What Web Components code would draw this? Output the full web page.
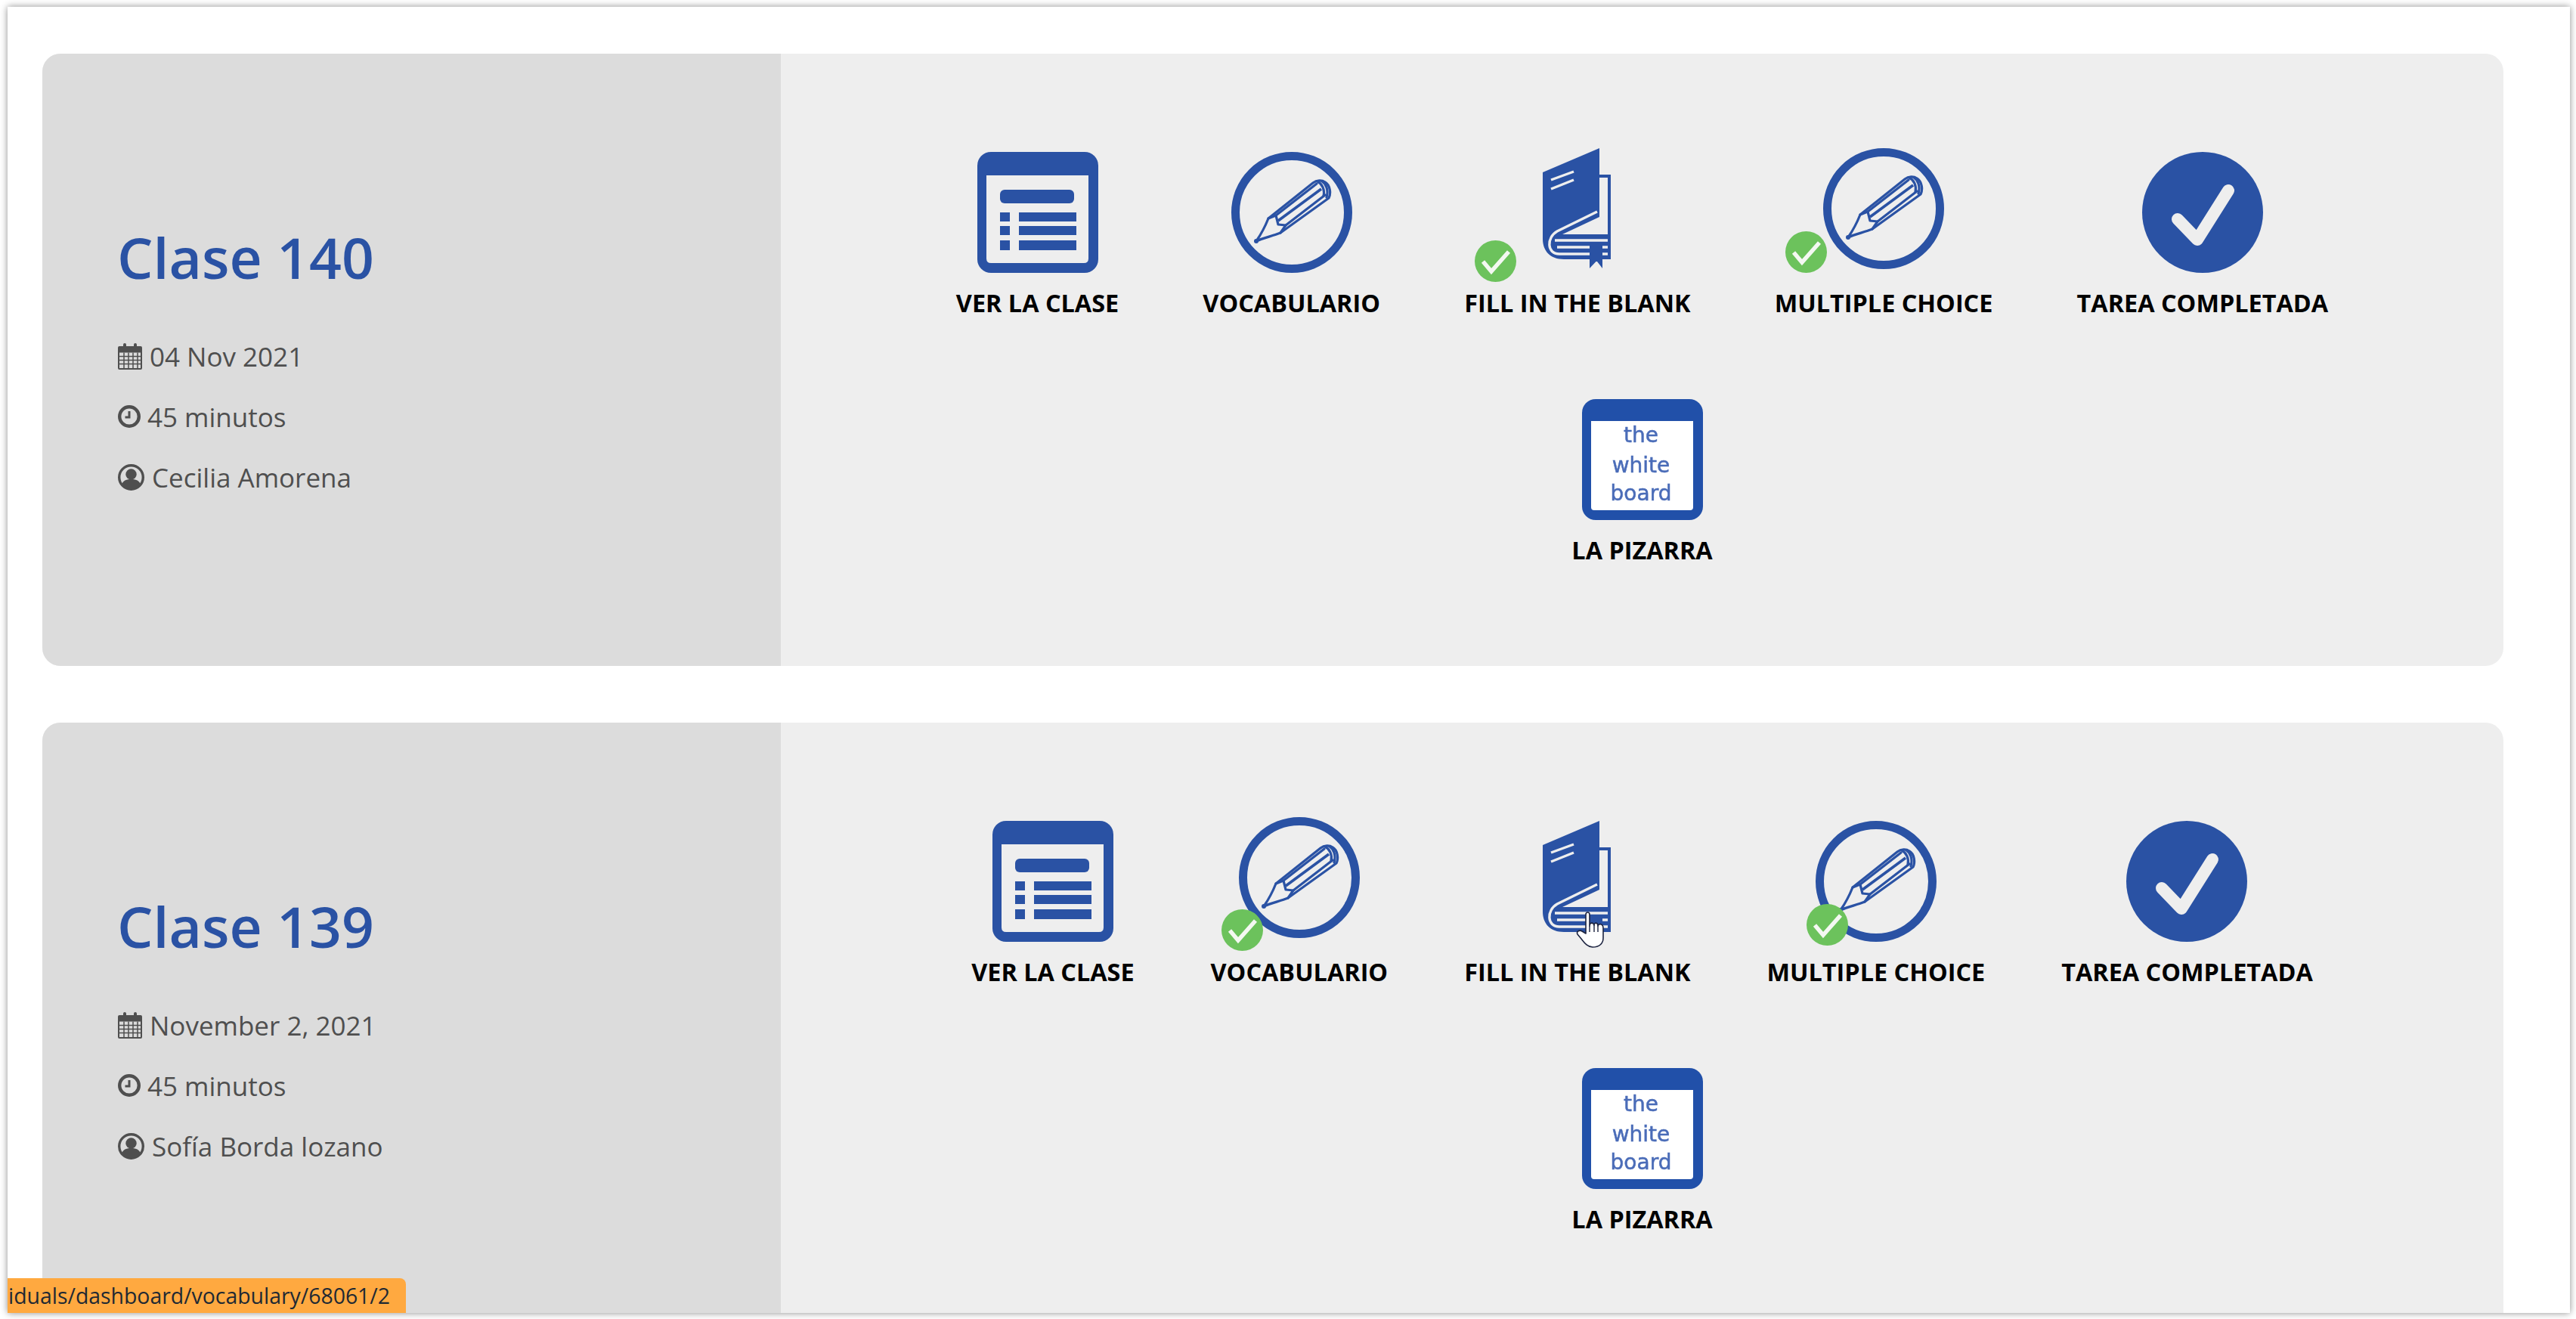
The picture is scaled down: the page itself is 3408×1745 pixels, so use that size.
<!DOCTYPE html>
<html lang="es">
<head>
<meta charset="utf-8">
<title>Clases</title>
<style>
  html, body { margin: 0; height: 100%; background: #fff; overflow: hidden; }
</style>
</head>
<body>

<template id="windowTemplate">
  <style>
    :host {
      display: block;
      position: relative;
      box-sizing: border-box;
      margin: 9px 8px 0 10px;
      height: 1728px;
      padding: 62px 88px 0 46px;
      background: #fff;
      overflow: hidden;
      font-family: "Open Sans", sans-serif;
    }
    .list { display: flex; flex-direction: column; gap: 75px; }
  </style>
  <div class="list"><slot></slot></div>
  <slot name="over"></slot>
</template>

<template id="cardTemplate">
  <style>
    :host {
      display: flex;
      flex: none;
      height: 810px;
      border-radius: 24px;
      overflow: hidden;
      background: #eee;
    }
    .side {
      box-sizing: border-box;
      flex: none;
      width: 977px;
      padding: 226px 0 0 100px;
      background: #dcdcdc;
    }
    .title {
      margin: 0 0 48px -1px;
      font-size: 75px;
      line-height: 86px;
      font-weight: 600;
      color: #2a52a4;
    }
    .acts {
      flex: 1;
      display: flex;
      flex-wrap: wrap;
      justify-content: center;
      align-content: flex-start;
      row-gap: 105px;
      padding: 130px 100px 0;
    }
  </style>
  <div class="side">
    <div class="title"><slot name="title"></slot></div>
    <slot name="meta"></slot>
  </div>
  <div class="acts"><slot></slot></div>
</template>

<template id="metaTemplate">
  <style>
    :host {
      display: flex;
      align-items: center;
      gap: 10px;
      height: 80px;
      font-size: 35px;
      color: #4f4f4f;
    }
    svg { display: block; fill: #4f4f4f; flex: none; }
  </style>
  <span id="icon"></span>
  <slot></slot>
</template>

<template id="activityTemplate">
  <style>
    :host {
      display: flex;
      flex-direction: column;
      align-items: center;
      height: 222px;
      padding: 0 var(--pad, 56px);
    }
    .pic {
      position: relative;
      width: 160px;
      height: 160px;
      margin-top: calc(var(--lift, 0px) * -1);
      margin-bottom: calc(17px + var(--lift, 0px));
    }
    .label {
      font-size: 32.4px;
      line-height: 44px;
      font-weight: 700;
      color: #000;
      white-space: nowrap;
    }
    ::slotted(done-badge) { position: absolute; }
  </style>
  <div class="pic"><slot name="icon"></slot><slot name="badge"></slot></div>
  <div class="label"><slot></slot></div>
</template>

<template id="badgeTemplate">
  <style>
    :host { display: block; width: 55px; height: 55px; }
    svg { display: block; }
  </style>
  <svg width="55" height="55" viewBox="0 0 55 55">
    <circle cx="27.5" cy="27.5" r="27.5" fill="#6cc25c"/>
    <path d="M11 28 L22 41 L45 15" fill="none" stroke="#f4f8f2" stroke-width="5.5"/>
  </svg>
</template>

<template id="statusTemplate">
  <style>
    :host {
      position: absolute;
      left: 0;
      bottom: 0;
      box-sizing: border-box;
      width: 527px;
      height: 46px;
      padding-right: 21px;
      border-top-right-radius: 8px;
      background: #ffa940;
      color: #1f2933;
      font-size: 28.4px;
      line-height: 47px;
      display: flex;
      justify-content: flex-end;
      white-space: nowrap;
    }
  </style>
  <slot></slot>
</template>

<template id="cursorTemplate">
  <style>
    :host { position: absolute; left: 2075px; top: 1196px; width: 40px; height: 52px; }
    svg { display: block; }
  </style>
  <svg width="40" height="52" viewBox="0 0 40 52">
    <path d="M13 30V5C13 1 18 1 18 5V20C18 15 23 15 24 19C24 15 29 15 29 20C30 16 36 17 36 23V36C36 44 30 48 22 48C15 48 11 42 7 37L2 31C0 27 5 25 8 27Z" fill="#fff" stroke="#1c2340" stroke-width="1.6" stroke-linejoin="round"/>
    <path d="M18 20V28M24 19V28M29 20V28" fill="none" stroke="#1c2340" stroke-width="1.4"/>
  </svg>
</template>

<script>
  const BLUE = "#2a52a4";
  const BG = "#eeeeee";

  const ICONS = {
    table: `
      <rect width="160" height="160" rx="18" fill="${BLUE}"/>
      <path d="M12 31H147V141Q147 147 141 147H18Q12 147 12 141Z" fill="${BG}"/>
      <rect x="30" y="50" width="98" height="18" rx="6" fill="${BLUE}"/>
      <path d="M30 80H43V92H30ZM55 80H131V92H55ZM30 98H43V110H30ZM55 98H131V110H55ZM30 117H43V130H30ZM55 117H131V130H55Z" fill="${BLUE}"/>`,
    pencil: `
      <circle cx="80" cy="80" r="74.500" fill="none" stroke="${BLUE}" stroke-width="11"/>
      <g fill="none" stroke="${BLUE}" stroke-width="3.200" stroke-linejoin="round" stroke-linecap="round">
        <path d="M33 118C40 108 45 98 49 88L108 41C113 37 120 37 124 40C131 44 132 55 129 61L65 107C55 111 42 114 33 118Z"/>
        <path d="M49 88L59 84L62 96L72 97L65 107"/>
        <path d="M59 84L113 42M72 97L124 57"/>
        <path d="M114 39C120 42 124 50 122 58"/>
        <path d="M120 39C125 42 129 50 126 60"/>
      </g>
      <path d="M62 91L119 49" fill="none" stroke="${BLUE}" stroke-width="3.6"/>
      <circle cx="33" cy="118" r="3" fill="${BLUE}"/>`,
    book: `
      <path d="M34 32L109 0V35H124V147H62C44 147 34 136 34 120Z" fill="${BLUE}"/>
      <path d="M109 39H120V114H60L109 91Z" fill="${BG}"/>
      <g fill="none" stroke="${BG}" stroke-width="3.4">
        <path d="M106 84L53 110C39 118 39 140 56 140H120"/>
        <path d="M50 122H120M53 131H120"/>
        <path d="M45 42L75 31M45 54L75 42"/>
      </g>
      <path d="M96 127H113V159L106 150L104.500 150L96 159Z" fill="${BLUE}"/>`,
    check: `
      <circle cx="80" cy="80" r="80" fill="${BLUE}"/>
      <path d="M47 89L73 116L114 51" fill="none" stroke="${BG}" stroke-width="16" stroke-linecap="round" stroke-linejoin="round"/>`,
    board: `
      <rect width="160" height="160" rx="18" fill="#2150a9"/>
      <path d="M12 29H147V143Q147 147 143 147H16Q12 147 12 143Z" fill="#fff"/>
      <g fill="#4a6cb8" stroke="#4a6cb8" stroke-width=".5" font-family="'DejaVu Sans', sans-serif" font-size="28" text-anchor="middle">
        <text x="78" y="57">the</text>
        <text x="78" y="97">white</text>
        <text x="78" y="134">board</text>
      </g>`,
  };

  const META_ICONS = {
    calendar: `<svg width="32" height="35" viewBox="0 0 32 35">
      <path d="M2 4H7V2Q7 0 9 0T11 2V4H21V2Q21 0 23 0T25 2V4H30Q32 4 32 6V33Q32 35 30 35H2Q0 35 0 33V6Q0 4 2 4Z"/>
      <path d="M2 12.500H30V33H2Z" fill="#dcdcdc"/>
      <path d="M2 17.500H30M2 22.500H30M2 27.500H30M8 12.500V33M14 12.500V33M20 12.500V33M26 12.500V33" stroke="#4f4f4f" stroke-width="1.5"/>
    </svg>`,
    clock: `<svg width="30" height="30" viewBox="0 0 30 30">
      <circle cx="15" cy="15" r="12.800" fill="none" stroke="#4f4f4f" stroke-width="4.400"/>
      <path d="M13.500 8H16.500V17.500H9.500V14.500H13.500Z"/>
    </svg>`,
    user: `<svg width="35" height="35" viewBox="0 0 35 35">
      <circle cx="17.500" cy="17.500" r="15.800" fill="none" stroke="#4f4f4f" stroke-width="3.400"/>
      <circle cx="17.500" cy="13.500" r="7.200"/>
      <path d="M5 27C7 21 12 20 17.500 20S28 21 30 27C27 31 22 33 17.500 33S8 31 5 27Z"/>
    </svg>`,
  };

  class ShadowElement extends HTMLElement {
    constructor(templateName) {
      super();
      const template = document.getElementById(templateName);
      this.attachShadow({ mode: "open" }).appendChild(template.content.cloneNode(true));
    }
  }

  class AppWindow extends ShadowElement {
    constructor() { super("windowTemplate"); }
  }

  class LessonCard extends ShadowElement {
    constructor() { super("cardTemplate"); }
  }

  class MetaRow extends ShadowElement {
    constructor() { super("metaTemplate"); }
    connectedCallback() {
      const holder = this.shadowRoot.getElementById("icon");
      holder.innerHTML = META_ICONS[this.getAttribute("icon")];
      this.style.gap = this.getAttribute("gap") || "";
    }
  }

  class LessonActivity extends ShadowElement {
    constructor() { super("activityTemplate"); }
  }

  class ActivityIcon extends HTMLElement {
    constructor() {
      super();
      this.attachShadow({ mode: "open" });
    }
    connectedCallback() {
      this.shadowRoot.innerHTML = `
        <style>:host { display: block; width: 160px; height: 160px; } svg { display: block; filter: blur(.5px); }</style>
        <svg width="160" height="160" viewBox="0 0 160 160">${ICONS[this.getAttribute("kind")]}</svg>`;
    }
  }

  class DoneBadge extends ShadowElement {
    constructor() { super("badgeTemplate"); }
  }

  class StatusPill extends ShadowElement {
    constructor() { super("statusTemplate"); }
  }

  class HandCursor extends ShadowElement {
    constructor() { super("cursorTemplate"); }
  }

  customElements.define("app-window", AppWindow);
  customElements.define("lesson-card", LessonCard);
  customElements.define("meta-row", MetaRow);
  customElements.define("lesson-activity", LessonActivity);
  customElements.define("activity-icon", ActivityIcon);
  customElements.define("done-badge", DoneBadge);
  customElements.define("status-pill", StatusPill);
  customElements.define("hand-cursor", HandCursor);
</script>

<app-window style="box-shadow: 0 0 9px rgba(0,0,0,.45)">
  <lesson-card style="--pad:55.600px">
    <span slot="title">Clase 140</span>
    <meta-row slot="meta" icon="calendar">04 Nov 2021</meta-row>
    <meta-row slot="meta" icon="clock" gap="9px">45 minutos</meta-row>
    <meta-row slot="meta" icon="user">Cecilia Amorena</meta-row>
    <lesson-activity><activity-icon slot="icon" kind="table"></activity-icon>VER LA CLASE</lesson-activity>
    <lesson-activity><activity-icon slot="icon" kind="pencil"></activity-icon>VOCABULARIO</lesson-activity>
    <lesson-activity style="--lift:5px"><activity-icon slot="icon" kind="book"></activity-icon><done-badge slot="badge" style="left:-56px;top:122px"></done-badge>FILL IN THE BLANK</lesson-activity>
    <lesson-activity style="--lift:5px"><activity-icon slot="icon" kind="pencil"></activity-icon><done-badge slot="badge" style="left:-50px;top:110px"></done-badge>MULTIPLE CHOICE</lesson-activity>
    <lesson-activity><activity-icon slot="icon" kind="check"></activity-icon>TAREA COMPLETADA</lesson-activity>
    <lesson-activity><activity-icon slot="icon" kind="board"></activity-icon>LA PIZARRA</lesson-activity>
  </lesson-card>
  <lesson-card style="--pad:50.500px">
    <span slot="title">Clase 139</span>
    <meta-row slot="meta" icon="calendar">November 2, 2021</meta-row>
    <meta-row slot="meta" icon="clock" gap="9px">45 minutos</meta-row>
    <meta-row slot="meta" icon="user">Sofía Borda lozano</meta-row>
    <lesson-activity><activity-icon slot="icon" kind="table"></activity-icon>VER LA CLASE</lesson-activity>
    <lesson-activity style="--lift:5px"><activity-icon slot="icon" kind="pencil"></activity-icon><done-badge slot="badge" style="left:-23px;top:122px"></done-badge>VOCABULARIO</lesson-activity>
    <lesson-activity><activity-icon slot="icon" kind="book"></activity-icon>FILL IN THE BLANK</lesson-activity>
    <lesson-activity><activity-icon slot="icon" kind="pencil"></activity-icon><done-badge slot="badge" style="left:-12px;top:110px"></done-badge>MULTIPLE CHOICE</lesson-activity>
    <lesson-activity><activity-icon slot="icon" kind="check"></activity-icon>TAREA COMPLETADA</lesson-activity>
    <lesson-activity><activity-icon slot="icon" kind="board"></activity-icon>LA PIZARRA</lesson-activity>
  </lesson-card>
  <status-pill slot="over">iduals/dashboard/vocabulary/68061/2</status-pill>
  <hand-cursor slot="over"></hand-cursor>
</app-window>

</body>
</html>
